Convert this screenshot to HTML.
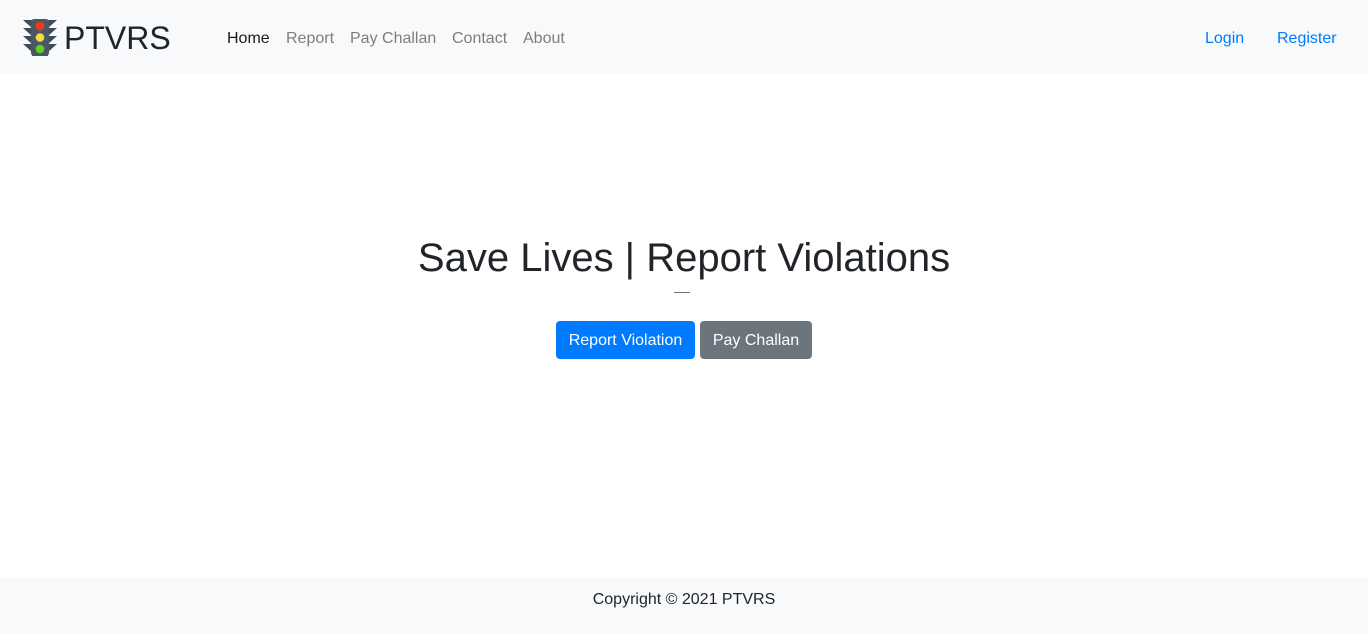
<!DOCTYPE html>
<html><head><style>
body{margin:0;width:1368px;height:634px;font-family:"Liberation Sans",sans-serif;background:#fff;position:relative;overflow:hidden}
nav{position:absolute;left:0;top:0;width:1368px;height:74px;background:#f8f9fa}
.brand{position:absolute;left:64px;top:18px;font-size:32px;color:#212529;line-height:40px}
.nl{position:absolute;top:29px;font-size:16px;line-height:19px;color:rgba(0,0,0,.5)}
.blue{color:#007bff}
h1{position:absolute;left:0;width:1368px;text-align:center;top:233px;margin:0;font-weight:400;font-size:40px;line-height:50px;color:#212529}
.hr{position:absolute;left:674px;top:292px;width:16px;height:1px;background:#6c757d}
.btn{position:absolute;top:321px;height:38px;line-height:39px;color:#fff;font-size:16px;border-radius:4px;text-align:center}
footer{position:absolute;left:0;top:578px;width:1368px;height:56px;background:#f8f9fa;text-align:center;font-size:16px;color:#212529;line-height:19px;padding-top:12px;box-sizing:border-box}
</style></head><body>
<nav>
<svg style="position:absolute;left:22px;top:18px" width="36" height="39" viewBox="0 0 36 39">
<path d="M1 2h9v4h16V2h9l-9 8 9 0-9 8h9l-9 8h9l-9 8v4H10v-4L1 26h9L1 18h9L1 10h9z" fill="#3e4c59"/>
<rect x="9" y="1" width="18" height="37" rx="3" fill="#4a5866"/>
<circle cx="18" cy="8" r="4.3" fill="#f53a1a"/>
<circle cx="18" cy="19.5" r="4.3" fill="#f3e040"/>
<circle cx="18" cy="31" r="4.3" fill="#5fd11f"/>
</svg>
<div class="brand">PTVRS</div>
<div class="nl" style="left:227px;color:#000000e6">Home</div>
<div class="nl" style="left:286px">Report</div>
<div class="nl" style="left:350px">Pay Challan</div>
<div class="nl" style="left:452px">Contact</div>
<div class="nl" style="left:523px">About</div>
<div class="nl blue" style="left:1205px">Login</div>
<div class="nl blue" style="left:1277px">Register</div>
</nav>
<h1>Save Lives | Report Violations</h1>
<div class="hr"></div>
<div class="btn" style="left:556px;width:139px;background:#007bff">Report Violation</div>
<div class="btn" style="left:700px;width:112px;background:#6c757d">Pay Challan</div>
<footer>Copyright © 2021 PTVRS</footer>
</body></html>
